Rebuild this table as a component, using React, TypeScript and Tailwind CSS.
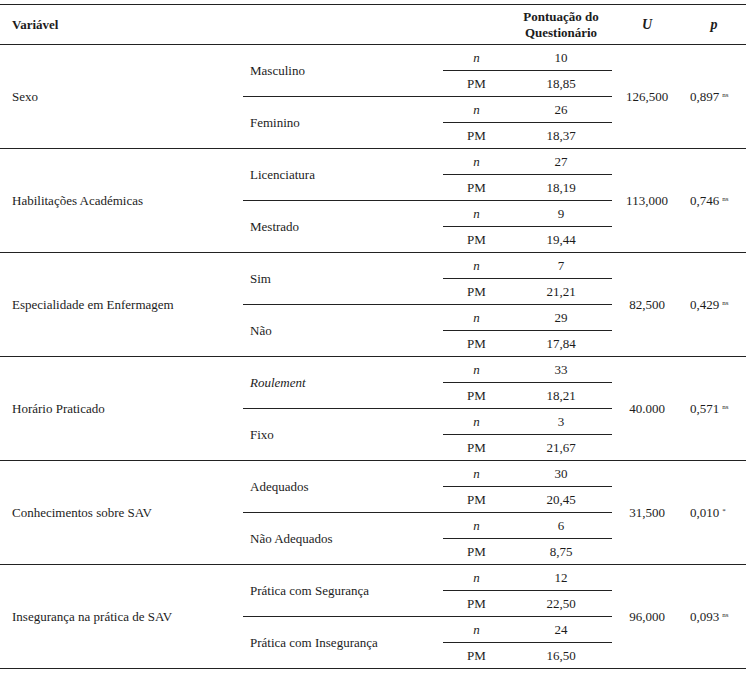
import React from "react";

type Sub = { label: string; italic?: boolean; n: string; pm: string };
type Group = { name: string; subs: [Sub, Sub]; u: string; p: string; sig: string };

const groups: Group[] = [
  { name: "Sexo", subs: [{ label: "Masculino", n: "10", pm: "18,85" }, { label: "Feminino", n: "26", pm: "18,37" }], u: "126,500", p: "0,897", sig: "ns" },
  { name: "Habilitações Académicas", subs: [{ label: "Licenciatura", n: "27", pm: "18,19" }, { label: "Mestrado", n: "9", pm: "19,44" }], u: "113,000", p: "0,746", sig: "ns" },
  { name: "Especialidade em Enfermagem", subs: [{ label: "Sim", n: "7", pm: "21,21" }, { label: "Não", n: "29", pm: "17,84" }], u: "82,500", p: "0,429", sig: "ns" },
  { name: "Horário Praticado", subs: [{ label: "Roulement", italic: true, n: "33", pm: "18,21" }, { label: "Fixo", n: "3", pm: "21,67" }], u: "40.000", p: "0,571", sig: "ns" },
  { name: "Conhecimentos sobre SAV", subs: [{ label: "Adequados", n: "30", pm: "20,45" }, { label: "Não Adequados", n: "6", pm: "8,75" }], u: "31,500", p: "0,010", sig: "*" },
  { name: "Insegurança na prática de SAV", subs: [{ label: "Prática com Segurança", n: "12", pm: "22,50" }, { label: "Prática com Insegurança", n: "24", pm: "16,50" }], u: "96,000", p: "0,093", sig: "ns" },
];

export default function App() {
  return (
    <div className="w-[746px] bg-white pt-[4px] text-[13px] text-[#1c1c1c] font-['Liberation_Serif',serif]">
      <table className="w-[746px] border-collapse table-fixed font-['Liberation_Serif',serif]">
        <colgroup>
          <col className="w-[243px]" />
          <col className="w-[200px]" />
          <col className="w-[67px]" />
          <col className="w-[102px]" />
          <col className="w-[70px]" />
          <col className="w-[64px]" />
        </colgroup>
        <thead>
          <tr className="h-[40px] border-t border-b border-[#222]">
            <th className="pl-[12px] text-left font-bold">Variável</th>
            <th></th>
            <th></th>
            <th className="text-center font-bold leading-[16px]">
              Pontuação do
              <br />
              Questionário
            </th>
            <th className="text-center font-bold italic text-[14px]">U</th>
            <th className="text-center font-bold italic text-[14px]">p</th>
          </tr>
        </thead>
        <tbody>
          {groups.map((g) => (
            <React.Fragment key={g.name}>
              <tr className="h-[26px]">
                <td rowSpan={4} className="pl-[12px] align-middle border-b border-[#222]">{g.name}</td>
                <td rowSpan={2} className="pl-[7px] align-middle border-b border-[#222]">
                  <span className={g.subs[0].italic ? "italic" : ""}>{g.subs[0].label}</span>
                </td>
                <td className="text-center italic border-b border-[#222]">n</td>
                <td className="text-center border-b border-[#222]">{g.subs[0].n}</td>
                <td rowSpan={4} className="text-center align-middle border-b border-[#222]">{g.u}</td>
                <td rowSpan={4} className="text-left pl-[8px] align-middle border-b border-[#222]">
                  {g.p}
                  <sup className="ml-[3px] text-[7px]">{g.sig}</sup>
                </td>
              </tr>
              <tr className="h-[26px]">
                <td className="text-center border-b border-[#222]">PM</td>
                <td className="text-center border-b border-[#222]">{g.subs[0].pm}</td>
              </tr>
              <tr className="h-[26px]">
                <td rowSpan={2} className="pl-[7px] align-middle border-b border-[#222]">
                  <span className={g.subs[1].italic ? "italic" : ""}>{g.subs[1].label}</span>
                </td>
                <td className="text-center italic border-b border-[#222]">n</td>
                <td className="text-center border-b border-[#222]">{g.subs[1].n}</td>
              </tr>
              <tr className="h-[26px]">
                <td className="text-center border-b border-[#222]">PM</td>
                <td className="text-center border-b border-[#222]">{g.subs[1].pm}</td>
              </tr>
            </React.Fragment>
          ))}
        </tbody>
      </table>
    </div>
  );
}
